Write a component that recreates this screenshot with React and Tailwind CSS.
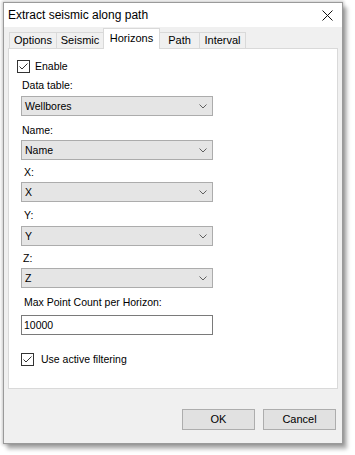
import React from 'react';

function CheckBox({ checked }) {
  return (
    <span className="w-[13px] h-[13px] border border-[#333333] bg-white flex items-center justify-center shrink-0">
      {checked && (
        <svg width="11" height="11" viewBox="0 0 11 11">
          <polyline points="1.5,5.5 4,8 9.5,2.5" fill="none" stroke="#333333" strokeWidth="1" />
        </svg>
      )}
    </span>
  );
}

function Chevron() {
  return (
    <svg width="8" height="5" viewBox="0 0 8 5" className="shrink-0">
      <polyline points="0.5,0.5 4,4 7.5,0.5" fill="none" stroke="#606060" strokeWidth="1" />
    </svg>
  );
}

function Select({ value }) {
  return (
    <div className="ml-[12px] w-[192px] h-[20px] bg-[#e5e5e5] border border-[#acacac] flex items-center justify-between pl-[3px] pr-[5px]">
      <span className="leading-[13px]">{value}</span>
      <Chevron />
    </div>
  );
}

const tabs = [
  { name: 'Options', w: 'w-[48px]' },
  { name: 'Seismic', w: 'w-[48px]' },
  { name: 'Horizons', w: 'w-[57px]', active: true },
  { name: 'Path', w: 'w-[41px]' },
  { name: 'Interval', w: 'w-[47px]' },
];

export default function App() {
  return (
    <div className="min-h-screen bg-white pt-[2px] pl-[3px] text-[10.5px] text-black font-['Liberation_Sans',Arial,sans-serif]">
      <div className="w-[340px] h-[442px] border border-[#9a9a9a] bg-[#f0f0f0] flex flex-col shadow-[0_0_3px_1px_rgba(0,0,0,0.22),4px_5px_4px_rgba(0,0,0,0.3)]">
        {/* title bar */}
        <div className="h-[24px] bg-white flex items-center justify-between pl-[4px] pr-[9px] shrink-0">
          <span className="text-[12px] leading-[14px]">Extract seismic along path</span>
          <svg width="11" height="11" viewBox="0 0 11 11">
            <path d="M0.5 0.5 L10.5 10.5 M10.5 0.5 L0.5 10.5" stroke="#111111" strokeWidth="1" />
          </svg>
        </div>

        {/* tabs */}
        <div className="flex items-end h-[21px] mt-px pl-[6px] -mb-px relative z-10 shrink-0">
          {tabs.map((t) =>
            t.active ? (
              <div
                key={t.name}
                className={`${t.w} h-[21px] bg-white border-l border-r border-t border-[#d9d9d9] -ml-px flex items-start justify-center pt-[3px]`}
              >
                <span className="leading-[13px] text-[11px]">{t.name}</span>
              </div>
            ) : (
              <div
                key={t.name}
                className={`${t.w} h-[17px] bg-[#f0f0f0] border border-[#d9d9d9] -ml-px flex items-center justify-center`}
              >
                <span className="leading-[13px] text-[11px]">{t.name}</span>
              </div>
            )
          )}
        </div>

        {/* panel */}
        <div className="mx-[4px] h-[341px] bg-white border border-[#d9d9d9] flex flex-col shrink-0">
          <div className="mt-[11px] ml-[8px] flex items-center h-[13px]">
            <CheckBox checked />
            <span className="ml-[5px] leading-[13px]">Enable</span>
          </div>

          <div className="mt-[6px] ml-[13px] leading-[13px] h-[13px]">Data table:</div>
          <div className="mt-[4px]"><Select value="Wellbores" /></div>

          <div className="mt-[8px] ml-[13px] leading-[13px] h-[13px]">Name:</div>
          <div className="mt-[3px]"><Select value="Name" /></div>

          <div className="mt-[6px] ml-[15px] leading-[13px] h-[13px]">X:</div>
          <div className="mt-[3px]"><Select value="X" /></div>

          <div className="mt-[7px] ml-[15px] leading-[13px] h-[13px]">Y:</div>
          <div className="mt-[4px]"><Select value="Y" /></div>

          <div className="mt-[6px] ml-[14px] leading-[13px] h-[13px]">Z:</div>
          <div className="mt-[3px]"><Select value="Z" /></div>

          <div className="mt-[8px] ml-[15px] leading-[13px] h-[13px]">Max Point Count per Horizon:</div>
          <div className="mt-[6px] ml-[12px] w-[192px] h-[20px] bg-white border border-[#7a7a7a] flex items-center pl-[2px]">
            <span className="leading-[13px]">10000</span>
          </div>

          <div className="mt-[18px] ml-[12px] flex items-center h-[13px]">
            <CheckBox checked />
            <span className="ml-[7px] leading-[13px]">Use active filtering</span>
          </div>
        </div>

        {/* buttons */}
        <div className="mt-[20px] flex justify-end gap-[8px] pr-[6px]">
          <button className="w-[73px] h-[21px] bg-[#e1e1e1] border border-[#adadad] leading-[13px] text-[11px]">OK</button>
          <button className="w-[73px] h-[21px] bg-[#e1e1e1] border border-[#adadad] leading-[13px] text-[11px]">Cancel</button>
        </div>
      </div>
    </div>
  );
}
